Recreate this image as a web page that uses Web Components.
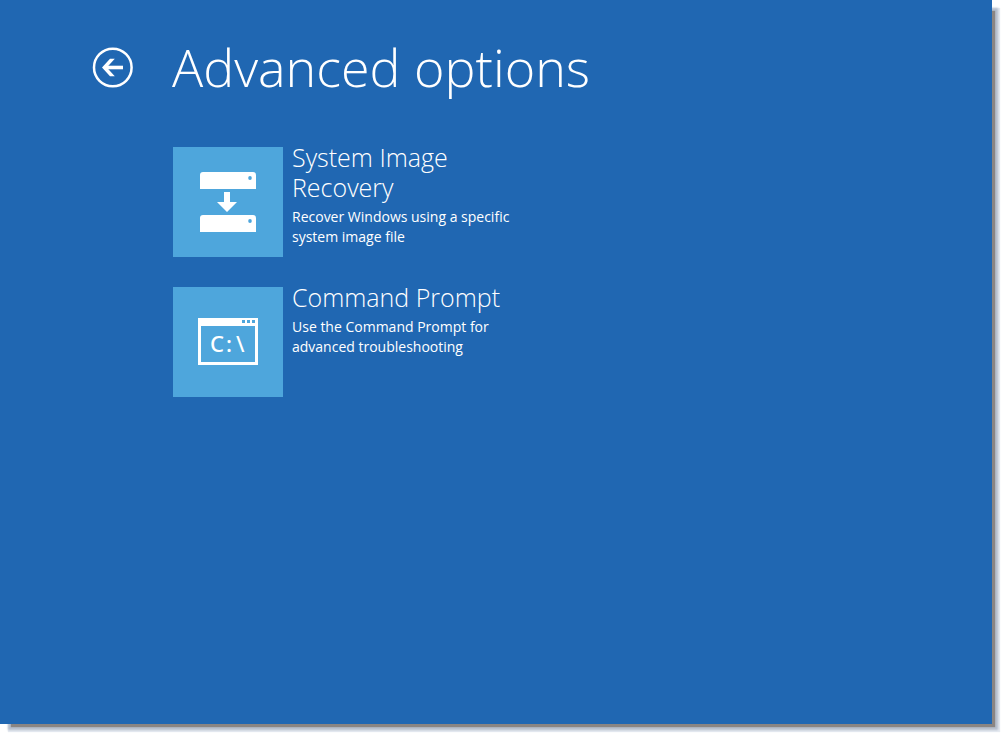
<!DOCTYPE html>
<html lang="en">
<head>
<meta charset="utf-8">
<title>Advanced options</title>
<style>
  body { margin: 0; background: #fff; }
</style>
</head>
<body>
<recovery-screen>
  <screen-header slot="header">Advanced options</screen-header>
  <option-tile>
    <disk-icon slot="icon"></disk-icon>
    <span slot="title">System Image Recovery</span>
    <span slot="description">Recover Windows using a specific system image file</span>
  </option-tile>
  <option-tile>
    <prompt-icon slot="icon"></prompt-icon>
    <span slot="title">Command Prompt</span>
    <span slot="description">Use the Command Prompt for advanced troubleshooting</span>
  </option-tile>
</recovery-screen>
<script>
  function define(name, markup) {
    const template = document.createElement('template');
    template.innerHTML = markup;
    customElements.define(name, class extends HTMLElement {
      constructor() {
        super();
        this.attachShadow({ mode: 'open' }).append(template.content.cloneNode(true));
      }
    });
  }

  define('recovery-screen', `
    <style>
      :host { display: flex; box-sizing: border-box; min-height: 100vh; padding: 0 15px 15px 0;
        font-family: "Open Sans", "Noto Sans", sans-serif; color: #fff; }
      main { flex: 1; box-sizing: border-box; padding: 31px 92px; background: #2067b2;
        box-shadow: 7px 7px 1px -4px #8a8583, 7px 7px 2px -1px #b4bdcb, 8px 8px 1px #e6eaf1; }
      .options { display: flex; flex-direction: column; align-items: flex-start; gap: 30px;
        padding: 44px 0 0 81px; }
    </style>
    <main>
      <slot name="header"></slot>
      <div class="options"><slot></slot></div>
    </main>`);

  define('screen-header', `
    <style>
      :host { display: flex; align-items: center; gap: 39px; height: 72px; }
      button { flex: none; display: block; width: 41px; height: 41px; padding: 0; border: 0;
        background: none; color: inherit; cursor: pointer; }
      svg { display: block; }
      h1 { margin: 0; font-size: 52px; font-weight: 300; line-height: 72px; }
    </style>
    <button type="button" aria-label="Back">
      <svg width="41" height="41" viewBox="0 0 41 41" fill="none" stroke="currentColor">
        <circle cx="20.8" cy="20.5" r="18.8" stroke-width="2.500"/>
        <path d="M31 20.500H12" stroke-width="3.600"/>
        <path d="M10 20.500L18 11.700h4.800L14.800 20.500L22.800 29.300H18Z" fill="currentColor" stroke="none"/>
      </svg>
    </button>
    <h1><slot></slot></h1>`);

  define('option-tile', `
    <style>
      :host { display: block; }
      button { display: flex; align-items: flex-start; gap: 9px; padding: 0; border: 0;
        background: none; color: inherit; font: inherit; text-align: left; cursor: pointer; }
      .icon { flex: none; display: grid; place-items: center; width: 110px; height: 110px;
        background: #4ea6dc; }
      .text { width: 220px; margin-top: -5px; }
      .title, .description { display: block; }
      .title { font-size: 25px; font-weight: 300; line-height: 30px; }
      .description { margin-top: 5px; font-size: 14px; line-height: 20px; }
    </style>
    <button type="button">
      <span class="icon"><slot name="icon"></slot></span>
      <span class="text">
        <span class="title"><slot name="title"></slot></span>
        <span class="description"><slot name="description"></slot></span>
      </span>
    </button>`);

  define('disk-icon', `
    <style>:host, svg { display: block; }</style>
    <svg width="110" height="110" viewBox="0 0 110 110" fill="#fff" aria-hidden="true">
      <path d="M27 42V28q0-3 3-3h50q3 0 3 3v14z"/>
      <path d="M27 85V71q0-3 3-3h50q3 0 3 3v14z"/>
      <path d="M51 45h6v10h7L54 65 44 55h7z"/>
      <g fill="#4ea6dc"><ellipse cx="77" cy="31" rx="1.800" ry="2.100"/><ellipse cx="77" cy="74" rx="1.800" ry="2.100"/></g>
    </svg>`);

  define('prompt-icon', `
    <style>
      :host, svg { display: block; }
      text { font: 500 22px "Noto Sans", sans-serif; }
    </style>
    <svg width="110" height="110" viewBox="0 0 110 110" fill="#fff" aria-hidden="true">
      <path fill-rule="evenodd" d="M25 31h60v47H25zM28 39v36h54V39z"/>
      <path fill="#4ea6dc" d="M69 33h3v3h-3zM74 33h3v3h-3zM79 33h3v3h-3z"/>
      <text x="37" y="65">C</text><text x="53" y="65">:</text><text x="63" y="65">\\</text>
    </svg>`);
</script>
</body>
</html>
